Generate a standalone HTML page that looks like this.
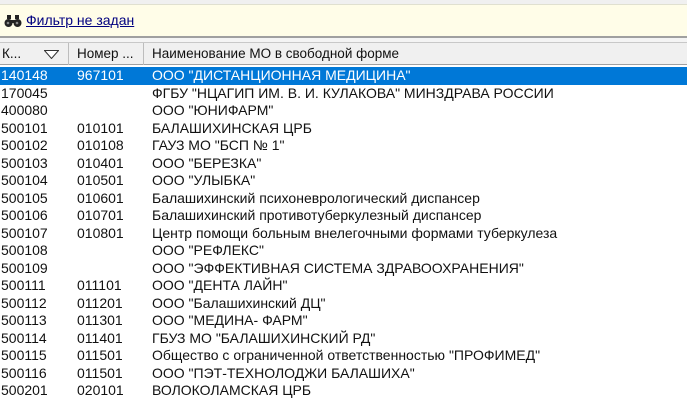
<!DOCTYPE html>
<html><head><meta charset="utf-8"><style>
*{margin:0;padding:0;box-sizing:border-box}
body{width:687px;height:402px;overflow:hidden;background:#fff;font-family:"Liberation Sans",Arial,sans-serif;font-size:14px;color:#111;position:relative}
.top{position:absolute;left:0;top:0;width:687px;height:4px;background:#f0f0f0}
.filter{position:absolute;left:0;top:4px;width:687px;height:32px;background:#fffde8;border-top:1px solid #e0e0d0}
.filter a{position:absolute;left:26px;top:7px;color:#00007f;text-decoration:underline;font-size:14px}
.bino{position:absolute;left:4px;top:10px}
.sep{position:absolute;left:0;top:36px;width:687px;height:2px;background:#a0a0a0}
.band{position:absolute;left:0;top:38px;width:687px;height:5px;background:#f4f4f4;border-bottom:1px solid #c8c8c8}
.hdr{position:absolute;left:0;top:43px;width:687px;height:22px;background:#f0f0f0;border-bottom:1px solid #a0a0a0;font-size:13.5px}
.hc{position:absolute;top:0;height:22px;line-height:22px;padding-left:2px;border-right:1px solid #bdbdbd}
.row{position:absolute;left:0;width:687px;height:17.5px;line-height:17.5px;white-space:nowrap}
.row span{position:absolute;top:0}
.sel{background:#0078d7;color:#fff}
</style></head><body>
<div class="top"></div>
<div class="filter">
<svg class="bino" width="18" height="13" viewBox="0 0 18 13"><rect x="3" y="0" width="4" height="4" fill="#222"/><rect x="11" y="0" width="4" height="4" fill="#222"/><circle cx="4.5" cy="8" r="4" fill="#222"/><circle cx="13.5" cy="8" r="4" fill="#222"/><rect x="7" y="5" width="4" height="3" fill="#222"/><circle cx="4" cy="8" r="1.3" fill="#888"/><circle cx="13" cy="8" r="1.3" fill="#888"/></svg>
<a>Фильтр не задан</a></div>
<div class="sep"></div>
<div class="band"></div>
<div class="hdr">
<div class="hc" style="left:0;width:69px">К...<svg style="position:absolute;left:44px;top:7px" width="15" height="9"><path d="M0.5 0.5H14.5L7.5 8.5Z" fill="#fff" stroke="#333"/></svg></div>
<div class="hc" style="left:69px;width:75px;padding-left:8px">Номер ...</div>
<div class="hc" style="left:144px;width:543px;padding-left:8px;border-right:none">Наименование МО в свободной форме</div>
</div>
<div class="row sel" style="top:67px"><span style="left:1px">140148</span><span style="left:77px">967101</span><span style="left:152px">ООО "ДИСТАНЦИОННАЯ МЕДИЦИНА"</span></div>
<div class="row" style="top:84.5px"><span style="left:1px">170045</span><span style="left:77px"></span><span style="left:152px">ФГБУ "НЦАГИП ИМ. В. И. КУЛАКОВА" МИНЗДРАВА РОССИИ</span></div>
<div class="row" style="top:102px"><span style="left:1px">400080</span><span style="left:77px"></span><span style="left:152px">ООО "ЮНИФАРМ"</span></div>
<div class="row" style="top:119.5px"><span style="left:1px">500101</span><span style="left:77px">010101</span><span style="left:152px">БАЛАШИХИНСКАЯ ЦРБ</span></div>
<div class="row" style="top:137px"><span style="left:1px">500102</span><span style="left:77px">010108</span><span style="left:152px">ГАУЗ МО "БСП № 1"</span></div>
<div class="row" style="top:154.5px"><span style="left:1px">500103</span><span style="left:77px">010401</span><span style="left:152px">ООО "БЕРЕЗКА"</span></div>
<div class="row" style="top:172px"><span style="left:1px">500104</span><span style="left:77px">010501</span><span style="left:152px">ООО "УЛЫБКА"</span></div>
<div class="row" style="top:189.5px"><span style="left:1px">500105</span><span style="left:77px">010601</span><span style="left:152px">Балашихинский психоневрологический диспансер</span></div>
<div class="row" style="top:207px"><span style="left:1px">500106</span><span style="left:77px">010701</span><span style="left:152px">Балашихинский противотуберкулезный диспансер</span></div>
<div class="row" style="top:224.5px"><span style="left:1px">500107</span><span style="left:77px">010801</span><span style="left:152px">Центр помощи больным внелегочными формами туберкулеза</span></div>
<div class="row" style="top:242px"><span style="left:1px">500108</span><span style="left:77px"></span><span style="left:152px">ООО "РЕФЛЕКС"</span></div>
<div class="row" style="top:259.5px"><span style="left:1px">500109</span><span style="left:77px"></span><span style="left:152px">ООО "ЭФФЕКТИВНАЯ СИСТЕМА ЗДРАВООХРАНЕНИЯ"</span></div>
<div class="row" style="top:277px"><span style="left:1px">500111</span><span style="left:77px">011101</span><span style="left:152px">ООО "ДЕНТА ЛАЙН"</span></div>
<div class="row" style="top:294.5px"><span style="left:1px">500112</span><span style="left:77px">011201</span><span style="left:152px">ООО "Балашихинский ДЦ"</span></div>
<div class="row" style="top:312px"><span style="left:1px">500113</span><span style="left:77px">011301</span><span style="left:152px">ООО "МЕДИНА- ФАРМ"</span></div>
<div class="row" style="top:329.5px"><span style="left:1px">500114</span><span style="left:77px">011401</span><span style="left:152px">ГБУЗ МО "БАЛАШИХИНСКИЙ РД"</span></div>
<div class="row" style="top:347px"><span style="left:1px">500115</span><span style="left:77px">011501</span><span style="left:152px">Общество с ограниченной ответственностью "ПРОФИМЕД"</span></div>
<div class="row" style="top:364.5px"><span style="left:1px">500116</span><span style="left:77px">011501</span><span style="left:152px">ООО "ПЭТ-ТЕХНОЛОДЖИ БАЛАШИХА"</span></div>
<div class="row" style="top:382px"><span style="left:1px">500201</span><span style="left:77px">020101</span><span style="left:152px">ВОЛОКОЛАМСКАЯ ЦРБ</span></div>
</body></html>
